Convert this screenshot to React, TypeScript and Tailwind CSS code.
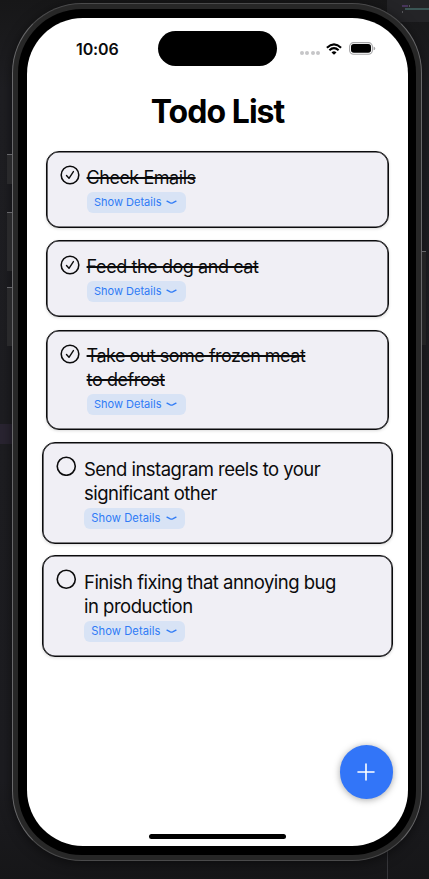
import React from "react";

type Todo = { lines: { text: string; spacing: string }[]; done: boolean };

const todos: Todo[] = [
  { lines: [{ text: "Check Emails", spacing: "tracking-[-0.45px]" }], done: true },
  { lines: [{ text: "Feed the dog and cat", spacing: "tracking-[-0.42px]" }], done: true },
  {
    lines: [
      { text: "Take out some frozen meat", spacing: "tracking-[-0.51px]" },
      { text: "to defrost", spacing: "tracking-[-0.42px]" },
    ],
    done: true,
  },
  {
    lines: [
      { text: "Send instagram reels to your", spacing: "tracking-[-0.52px]" },
      { text: "significant other", spacing: "tracking-[-0.5px]" },
    ],
    done: false,
  },
  {
    lines: [
      { text: "Finish fixing that annoying bug", spacing: "tracking-[-0.51px]" },
      { text: "in production", spacing: "tracking-[-0.5px]" },
    ],
    done: false,
  },
];

function StatusIcon({ done }: { done: boolean }) {
  return (
    <svg
      viewBox="0 0 20 20"
      className={done ? "mt-[13.2px] h-[20px] w-[20px] shrink-0" : "mt-[13.2px] h-[20.5px] w-[20.5px] shrink-0"}
      fill="none"
      stroke="#0b0b0c"
      strokeLinecap="round"
      strokeLinejoin="round"
    >
      <circle cx="10" cy="10" r="8.8" strokeWidth="1.55" />
      {done && <path d="M6.5 10.6 L9 13.3 L13.4 6.6" strokeWidth="1.4" />}
    </svg>
  );
}

function DetailsButton({ done }: { done: boolean }) {
  return (
    <button
      className={
        done
          ? "flex h-[21px] w-[99px] items-center rounded-[6px] bg-[#d8e3f5] pl-[7.3px] text-[#2f7bf6]"
          : "flex h-[21px] w-[101px] items-center rounded-[6px] bg-[#d8e3f5] pl-[7.3px] text-[#2f7bf6]"
      }
    >
      <span
        className={
          done
            ? "w-[72.5px] whitespace-nowrap text-left text-[11px] leading-[21px] tracking-[0.02px]"
            : "w-[74.5px] whitespace-nowrap text-left text-[11.2px] leading-[21px] tracking-[0.06px]"
        }
      >
        Show Details
      </span>
      <svg viewBox="0 0 11 5" className="h-[5px] w-[11px] shrink-0" fill="none" stroke="currentColor" strokeWidth="1.3" strokeLinecap="round">
        <path d="M1 1.2 L4.3 2.8 Q5.5 3.3 6.7 2.8 L10 1.2" />
      </svg>
    </button>
  );
}

function TodoCard({ todo }: { todo: Todo }) {
  const two = todo.lines.length === 2;
  const box = todo.done
    ? two
      ? "mx-[19px] h-[100px] pl-[13px] mb-[12px]"
      : "mx-[19px] h-[76.6px] pl-[13px] mb-[12.8px]"
    : "mx-[15px] h-[101.8px] pl-[13.2px] mb-[11.3px]";
  return (
    <li
      className={
        "flex rounded-[13px] border border-[#0b0b0d] bg-[#f0eff5] shadow-[inset_0_0_0_0.6px_#0b0b0d,0_1px_3px_rgba(0,0,0,0.14)] " + box
      }
    >
      <StatusIcon done={todo.done} />
      <div className={todo.done ? "ml-[6.6px] pt-[13.5px]" : "ml-[7.3px] pt-[14px]"}>
        {todo.lines.map((l) => (
          <div
            key={l.text}
            className={
              (todo.done
                ? "h-[23.3px] w-max whitespace-nowrap text-[18px] leading-[24px] line-through decoration-[1.5px] "
                : "h-[23.8px] w-max whitespace-nowrap text-[18.5px] leading-[24px] ") + l.spacing
            }
          >
            {l.text}
          </div>
        ))}
        <div className="pt-[3.2px]">
          <DetailsButton done={todo.done} />
        </div>
      </div>
    </li>
  );
}

function StatusBar() {
  return (
    <div className="flex h-[68px] items-start">
      <div className="w-[131px] pl-[49px] pt-[21px] text-[16px] font-semibold leading-[20px] tracking-[-0.1px]">10:06</div>
      <div className="mt-[13px] h-[35px] w-[119px] rounded-full bg-black" />
      <div className="mt-[33px] ml-[23px] flex gap-[1.3px]">
        {[0, 1, 2, 3].map((i) => (
          <span key={i} className="h-[4px] w-[4px] rounded-full bg-[#c6c6c8]" />
        ))}
      </div>
      <svg viewBox="0 0 16 12" className="ml-[6px] mt-[24.5px] h-[12px] w-[16px]" fill="none" stroke="#000" strokeWidth="2.1">
        <path d="M0.9 4.7 Q8 -1.8 15.1 4.7" />
        <path d="M3.4 7.3 Q8 3.1 12.6 7.3" />
        <path d="M8 11.8 L5.5 9.4 Q8 7.3 10.5 9.4 Z" fill="#000" stroke="none" />
      </svg>
      <svg viewBox="0 0 27 13" className="ml-[7px] mt-[24.3px] h-[13px] w-[27px]" fill="none">
        <rect x="0.6" y="0.6" width="22.8" height="11.6" rx="4" stroke="#a5a5a7" strokeWidth="1.1" />
        <rect x="2" y="2" width="20" height="8.8" rx="2.8" fill="#000" />
        <path d="M24.6 4.5 Q26.2 5 26.2 6.4 Q26.2 7.8 24.6 8.3 Z" fill="#a5a5a7" />
      </svg>
    </div>
  );
}

export default function App() {
  return (
    <div className="relative h-[879px] w-[429px] overflow-hidden bg-[#1c1c20] pl-[12px] pt-[3px] font-['Inter','Liberation_Sans',sans-serif] text-[#0b0b0c]">
      <div className="absolute left-0 top-0 h-[879px] w-[429px] bg-[linear-gradient(180deg,#171718_0px,#1e1e22_90px,#1c1c20_780px,#161618_879px)]" />
      <div className="absolute left-[387px] top-0 h-[22px] w-[42px] bg-[#242427]" />
      <div className="absolute left-[402px] top-[5px] h-[2px] w-[6px] bg-[#47355b]" />
      <div className="absolute left-[409px] top-[5px] h-[2px] w-px bg-[#56565a]" />
      <div className="absolute left-[405px] top-[8px] h-[2px] w-[24px] bg-[#3b5655]" />
      <div className="absolute left-[402px] top-[11px] h-[2px] w-px bg-[#56565a]" />
      <div className="absolute left-0 top-[424px] h-[20px] w-[12px] bg-[#292431]" />
      <div className="absolute left-[387px] top-[848px] h-[31px] w-px bg-[#36363a]" />

      <div className="relative h-[858px] w-[410px] rounded-[70px] border border-[#68686a] border-y-[#4a4a4b] bg-[#272727] p-[5px] shadow-[0_2px_12px_rgba(0,0,0,0.5)]">
        <div className="absolute -left-[6px] top-[150px] h-[30px] w-[5px] border-t border-[#66666a] bg-[#29292b]" />
        <div className="absolute -left-[6px] top-[208px] h-[59px] w-[5px] border-t border-[#66666a] bg-[#29292b]" />
        <div className="absolute -left-[6px] top-[283px] h-[59px] w-[5px] border-t border-[#66666a] bg-[#29292b]" />
        <div className="absolute -right-[5px] top-[247px] h-[94px] w-[4px] border-t border-[#66666a] bg-[#222223]" />
        <div className="h-full rounded-[64px] bg-black p-[9px] pr-[8px]">
          <main className="flex h-full w-full flex-col overflow-hidden rounded-[56px] bg-white">
            <StatusBar />
            <h1 className="h-[65px] whitespace-nowrap pt-px text-center text-[32px] font-bold leading-[50px] tracking-[-0.95px] text-black">Todo List</h1>
            <ul className="flex flex-col">
              {todos.map((t) => (
                <TodoCard key={t.lines[0].text} todo={t} />
              ))}
            </ul>
            <div className="mt-auto flex justify-end pr-[15px]">
              <button aria-label="Add" className="flex h-[53.5px] w-[53.5px] items-center justify-center rounded-full bg-[#3275f8] shadow-[0_1px_7px_rgba(0,0,0,0.35)]">
                <svg viewBox="0 0 18 18" className="h-[18px] w-[18px]" stroke="#fff" strokeWidth="1.6" strokeLinecap="round">
                  <path d="M9 1 V17 M1 9 H17" />
                </svg>
              </button>
            </div>
            <div className="mx-auto mt-[35.3px] mb-[7px] h-[5px] w-[137px] shrink-0 rounded-full bg-black" />
          </main>
        </div>
      </div>
    </div>
  );
}
